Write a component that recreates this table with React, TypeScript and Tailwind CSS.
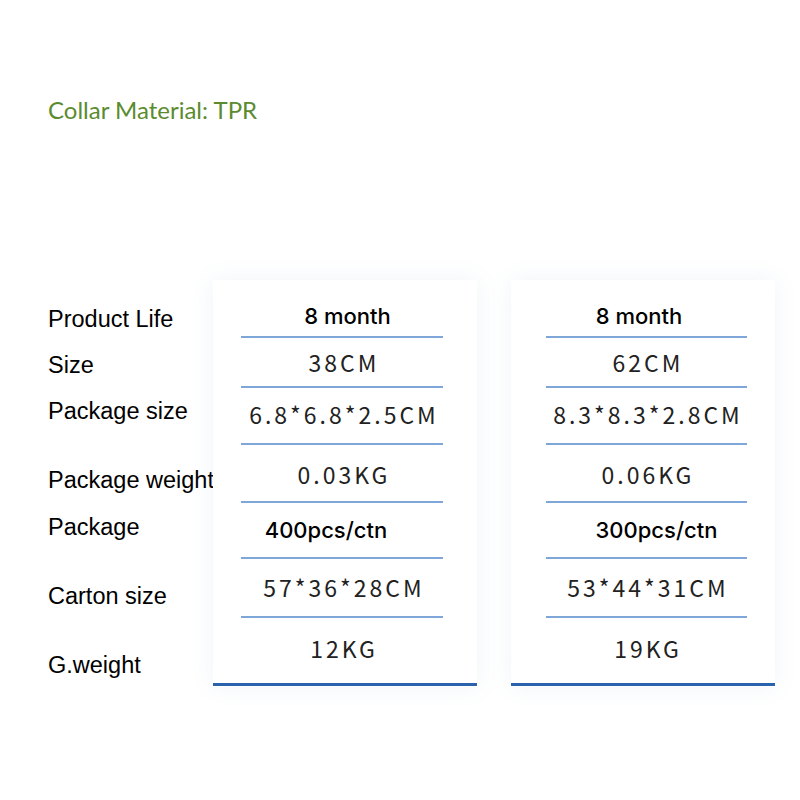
import React from "react";

type Cell = { text: string; h: string; pb: string; kind: "sans" | "cjk" };

const cells: Cell[] = [
  { text: "8 month", h: "h-[56px]", pb: "pb-[9px]", kind: "sans" },
  { text: "38CM", h: "h-[48px]", pb: "pb-[12px]", kind: "cjk" },
  { text: "6.8*6.8*2.5CM", h: "h-[55px]", pb: "pb-[17px]", kind: "cjk" },
  { text: "0.03KG", h: "h-[56px]", pb: "pb-[15px]", kind: "cjk" },
  { text: "400pcs/ctn", h: "h-[54px]", pb: "pb-[16px]", kind: "sans" },
  { text: "57*36*28CM", h: "h-[57px]", pb: "pb-[17px]", kind: "cjk" },
  { text: "12KG", h: "h-[65px]", pb: "pb-[23px]", kind: "cjk" },
];

const leftTexts = cells.map((c) => c.text);
const rightTexts = ["8 month", "62CM", "8.3*8.3*2.8CM", "0.06KG", "300pcs/ctn", "53*44*31CM", "19KG"];

const leftShift = ["pl-[11px]", "pl-[4px]", "pl-[4px]", "pl-[4px]", "pr-[32px]", "pl-[4px]", "pl-[4px]"];
const rightShift = ["pr-[15px]", "pl-[3px]", "pl-[3px]", "pl-[3px]", "pl-[20px]", "pl-[3px]", "pl-[3px]"];

const labels: { text: string; mt: string }[] = [
  { text: "Product Life", mt: "mt-[28px]" },
  { text: "Size", mt: "mt-[22px]" },
  { text: "Package size", mt: "mt-[23px]" },
  { text: "Package weight", mt: "mt-[45px]" },
  { text: "Package", mt: "mt-[24px]" },
  { text: "Carton size", mt: "mt-[45px]" },
  { text: "G.weight", mt: "mt-[46px]" },
];

function Card({ texts, shifts, padL, padR }: { texts: string[]; shifts: string[]; padL: string; padR: string }) {
  return (
    <div className="w-[264px] bg-white flex flex-col shadow-[0_0_22px_rgba(90,130,190,0.09)]">
      <div className={`flex flex-col ${padL} ${padR}`}>
        {cells.map((c, i) => (
          <React.Fragment key={i}>
            <div className={`${c.h} ${c.pb} ${shifts[i]} flex items-end justify-center`}>
              {c.kind === "sans" ? (
                <span className="leading-none text-[22px] font-medium text-black [font-family:Inter,'Liberation_Sans',sans-serif]">
                  {texts[i]}
                </span>
              ) : (
                <span className="leading-none text-[23px] tracking-[3px] text-[#222] [font-family:'Noto_Sans_CJK_SC','Noto_Sans',sans-serif]">
                  {texts[i]}
                </span>
              )}
            </div>
            {i < cells.length - 1 && <div className="h-[2px] bg-[#7fa6d8]" />}
          </React.Fragment>
        ))}
      </div>
      <div className="h-[3px] bg-[#2a62ae]" />
      <div className="h-[1px]" />
    </div>
  );
}

export default function App() {
  return (
    <div className="w-[800px] h-[800px] bg-white overflow-hidden">
      <div className="pt-[98px] pl-[48px]">
        <div className="leading-none text-[24px] text-[#5b8b2f] [font-family:Lato,'Open_Sans',sans-serif]">
          Collar Material: TPR
        </div>
      </div>
      <div className="mt-[158px] pl-[48px] flex">
        <div className="w-[165px] flex flex-col">
          {labels.map((l, i) => (
            <div
              key={i}
              className={`${l.mt} leading-none text-[23.5px] text-black whitespace-nowrap [font-family:'Liberation_Sans',Arial,sans-serif]`}
            >
              {l.text}
            </div>
          ))}
        </div>
        <div className="flex gap-[34px]">
          <Card texts={leftTexts} shifts={leftShift} padL="pl-[28px]" padR="pr-[34px]" />
          <Card texts={rightTexts} shifts={rightShift} padL="pl-[35px]" padR="pr-[28px]" />
        </div>
      </div>
    </div>
  );
}
